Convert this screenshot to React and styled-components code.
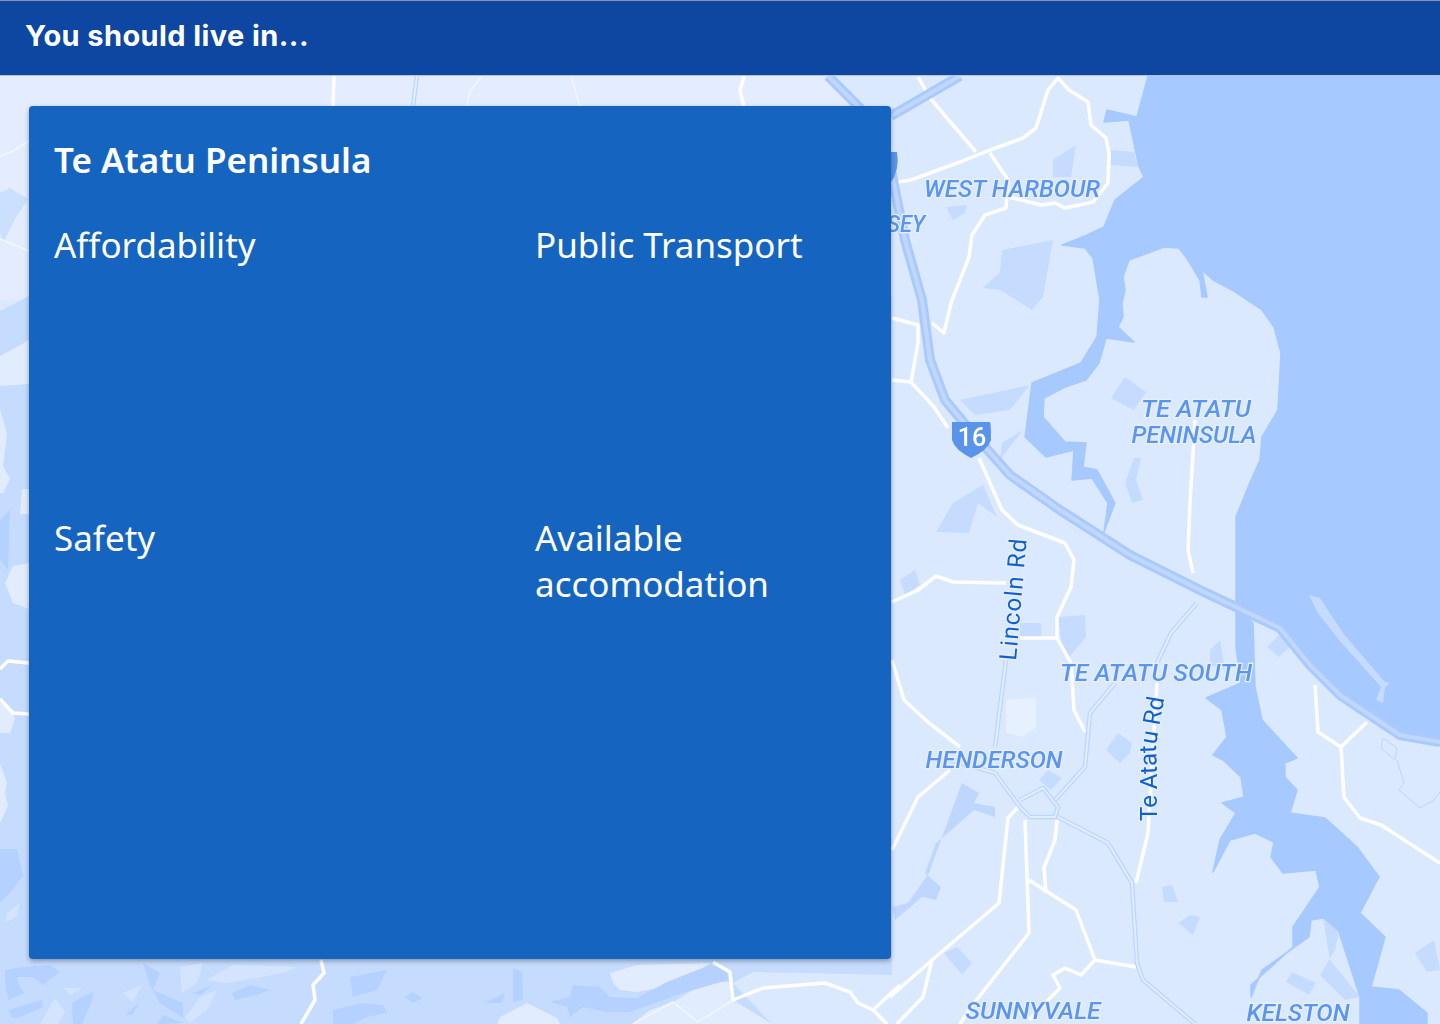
import React from 'react';
import styled, { createGlobalStyle } from 'styled-components';

const GlobalStyle = createGlobalStyle`
    html, body {
        margin:0;
        padding:0;
        height:100%;
        overflow:hidden;
    }
    body {
        font-family:"Noto Sans", "Open Sans", sans-serif;
    }
`

const WATER = '1148,76 1440,76 1440,745 1400,735 1340,695 1310,665 1280,628 1236,606 1236,550 1236,517 1251,480 1260,460 1262,437 1278,410 1281,353 1274,327 1262,310 1232,290 1213,280 1202,270 1207,297 1202,297 1200,280 1188,260 1179,248 1164,247 1129,260 1123,277 1125,290 1122,303 1123,317 1118,327 1134,342 1106,338 1099,363 1086,380 1065,387 1044,398 1043,417 1065,442 1086,443 1083,467 1097,470 1115,503 1104,532 1108,503 1092,478 1072,480 1074,450 1046,457 1025,437 1032,383 1081,363 1097,337 1100,300 1093,258 1085,248 1062,245 1085,236 1104,227 1115,200 1144,177 1139,167 1129,120 1104,122 1107,110 1137,117';
const CREEK = '1236,606 1253,623 1255,687 1262,720 1297,758 1285,763 1285,777 1297,790 1290,813 1325,818 1357,847 1379,877 1360,913 1385,937 1371,987 1399,990 1427,1013 1427,1024 1360,1024 1360,997 1339,932 1323,918 1311,920 1309,937 1262,970 1251,997 1251,985 1293,947 1293,927 1320,887 1316,870 1283,873 1271,857 1274,842 1255,833 1230,840 1213,872 1220,840 1236,813 1222,803 1244,797 1241,777 1223,760 1213,755 1227,737 1222,710 1206,698 1241,683 1236,647';
const WEST_CREEK = '953,807 962,783 979,793 974,803 995,807 995,817 974,810 948,833 936,843 925,873 941,887 936,900 922,897 895,920 892,907 908,903 929,873';

const SHOALS = [
    '1053,160 1076,145 1071,177 1053,177',
    '983,288 1000,272 1002,250 1053,240 1043,297 1032,310 1000,290',
    '1111,398 1125,377 1146,392 1134,410',
    '1125,483 1134,458 1141,458 1136,480 1143,500 1132,503',
    '946,207 967,205 965,213 953,220',
    '1058,617 1085,615 1086,637 1069,657 1062,647',
    '1020,623 1041,623 1041,637 1020,637',
    '1106,750 1118,733 1132,743 1130,753 1120,763',
    '1039,780 1048,770 1062,778 1051,790',
    '944,953 957,947 972,963 962,975',
    '1162,887 1172,885 1178,902 1164,902',
    '1178,923 1190,915 1200,917 1193,935',
    '1286,982 1292,972 1316,983 1309,995',
    '1415,953 1434,940 1440,970 1427,972',
    '1267,647 1279,635 1290,647 1279,657',
    '1339,932 1323,918 1330,960 1360,997 1345,1000 1320,975 1335,950',
    '960,400 1030,385 1010,410 975,415',
    '1002,443 1023,430 1000,460',
    '936,532 953,503 983,485 997,517 978,503 969,533',
    '1111,150 1134,152 1138,167 1111,165',
    '900,580 915,570 920,585 905,595',
    '1210,650 1220,640 1225,670 1210,665',
];

const ROADS = [
    '892,183 911,180 960,162 990,150 1023,138 1036,128 1048,90 1058,78 1069,90 1088,102 1091,125 1106,138 1109,153 1108,183 1093,202 1065,208 1055,203 1041,205 1009,197',
    '918,77 930,98 976,152',
    '990,153 1008,180 1006,208 985,215 972,235 969,257 951,303 944,333 932,323',
    '892,318 918,325 918,343 911,382 892,380',
    '911,382 934,407 948,428',
    '979,458 1002,510 1018,525 1065,543 1074,560 1071,587 1057,617 1057,638 1020,638',
    '1057,638 1071,663 1074,710 1085,732',
    '892,602 918,590 936,576 953,582 1006,583',
    '1195,420 1190,503 1188,550 1193,573',
    '1157,683 1148,833 1136,883',
    '892,660 904,700 929,723 960,747',
    '950,770 918,797 892,850',
    '1018,807 1008,818 999,903 932,960 890,997',
    '932,960 923,997 897,1024',
    '1025,820 1029,933 971,1007 960,1024',
    '1029,880 1076,910 1095,960 1136,967',
    '1095,960 1081,975 1065,968 1053,975 1060,988 1029,1020',
    '1057,820 1055,840 1044,868 1046,893',
    '1315,685 1318,732 1341,747 1367,722',
    '1341,747 1344,797 1360,818 1381,825 1440,863',
    '321,960 324,973 313,985 315,1000 301,1024',
    '713,962 730,972 733,1000 763,988 825,983 850,992 858,1003 873,1010 900,985',
    '873,1010 887,1024',
    '0,669 8,661 29,663',
    '0,699 13,713 29,714',
    '334,76 333,106',
    '744,76 740,91 744,106',
];

const THIN_ROADS = [
    '0,156 13,151 29,141',
    '0,239 29,251',
    '482,76 470,91 467,106',
    '571,76 580,106',
    '633,1024 673,1002 698,1022 733,1000',
];

const LIGHT_ROADS = [
    '1197,603 1171,633 1157,663',
    '1115,683 1090,713 1085,767 1055,800',
    '1020,800 1043,788 1058,807 1055,817 1030,817 1020,807 995,773',
    '1058,817 1108,843 1132,883 1137,963 1143,980 1195,1024',
    '1006,660 995,747',
    '995,773 950,760',
    '417,76 413,106',
];

// terrain on the western side, lightest first
const WEST_LIGHT = [
    '0,386 29,384 29,340 15,348 0,356',
    '0,409 7,433 3,466 10,479 3,493 0,493',
    '22,489 29,489 29,514 20,514',
    '5,583 13,566 29,563 29,609 13,603',
    '0,699 13,713 15,719 10,733 0,733',
    '0,763 7,783 5,793 8,806 0,823',
    '610,973 637,965 710,963 690,977 663,987 637,992 620,990 613,983',
    '497,1024 500,1017 527,1003 557,1018 560,1024',
    '632,1024 650,1010 673,1002 707,982 730,982 733,1000 772,1024',
];

const WEST_PALE = [
    '180,967 203,963 197,983 182,993',
    '207,980 233,965 297,967 283,973 227,983',
    '40,1024 55,998 65,1012 58,1024',
    '63,988 82,988 70,995',
    '123,993 142,985 132,1002',
    '185,1018 200,997 217,990 207,1010 190,1023',
    '7,913 20,903 17,916 5,923',
];

const WEST_DARK = [
    '5,970 23,967 50,965 60,972 43,985 33,977 17,977 20,988 25,993 8,1000 5,980',
    '8,1010 42,1000 43,1007 20,1017 12,1018',
    '72,1003 92,992 93,998 82,1024 73,1024',
    '125,1015 140,1002 132,1015',
    '143,963 160,973 153,990 183,1003 183,1018 160,1003 150,985',
    '232,993 250,985 270,990 257,995 235,1000',
    '193,993 213,985 200,995',
    '157,1024 163,1015 183,1023',
    '333,1010 363,1003 383,1005 387,1013 367,1017 353,1024 333,1024',
    '350,977 387,970 377,990 353,997',
    '405,997 413,992 422,998 413,1003',
    '550,1002 570,997 573,985 600,987 610,997 637,998 667,982 710,965 727,970 728,980 683,993 630,1012 607,1012 583,1007 570,1017 567,1007',
    '485,1003 505,993 502,1003',
    '513,968 522,972 523,1000 513,1002',
    '0,849 17,849 23,876 10,893 0,903',
    '0,520 10,510 8,570 0,560',
];

const MotorwayPoints = '828,76 860,108 891,170 905,240 922,300 930,360 945,400 970,430 1010,475 1060,510 1130,555 1200,590 1280,628 1310,665 1340,695 1400,735 1440,742';
const MotorwayNorth = '891,116 960,76';

const PLACE_LABELS = [
    { text:'WEST HARBOUR', x:1012, y:197, width:176 },
    { text:'SEY', x:906, y:232, width:38 },
    { text:'TE ATATU', x:1196, y:417, width:110 },
    { text:'PENINSULA', x:1194, y:443, width:125 },
    { text:'TE ATATU SOUTH', x:1156, y:681, width:192 },
    { text:'HENDERSON', x:994, y:768, width:137 },
    { text:'SUNNYVALE', x:1033, y:1019, width:135 },
    { text:'KELSTON', x:1298, y:1021, width:103 },
];

const MapView = () => (
    <MapLayer viewBox="0 76 1440 948" preserveAspectRatio="none">
        <defs>
            <path id="te-atatu-rd" d="M1157 821 L1157 772 L1156 745 L1164 700" />
        </defs>
        <rect x="0" y="76" width="1440" height="948" fill="#dbe9ff" />
        <polygon points="0,76 826,76 860,106 860,300 0,300" fill="#e3edff" />
        <polygon points="0,311 29,296 892,296 892,1024 0,1024" fill="#c6dcff" />
        <polygon points="0,193 10,188 28,199 15,219 3,243 0,233" fill="#cbdfff" />
        <polygon points="733,983 753,972 892,975 892,1024 772,1024" fill="#dbe9ff" />
        {WEST_LIGHT.map((p, i) => <polygon key={i} points={p} fill="#e1ecff" />)}
        {WEST_PALE.map((p, i) => <polygon key={i} points={p} fill="#d4e4ff" />)}
        {WEST_DARK.map((p, i) => <polygon key={i} points={p} fill="#b5d1ff" />)}
        <WaterShape points={WATER} />
        <WaterShape points={CREEK} />
        <polygon points={WEST_CREEK} fill="#bfd7ff" />
        {SHOALS.map((p, i) => <polygon key={i} points={p} fill="#c5dbff" />)}
        <polygon points="1006,700 1036,698 1036,727 1023,737 1006,733" fill="#e6f0ff" />
        <polygon points="1309,595 1320,598 1343,633 1385,682 1390,683 1385,687 1383,703 1376,700 1381,687 1339,640 1318,613" fill="#c5dbff" />
        <polyline points="1383,738 1397,748 1395,760 1381,748 1383,738" fill="none" stroke="#bcd5ff" strokeWidth="1" />
        <polyline points="1397,760 1404,783 1399,790 1420,808 1434,800 1440,792" fill="none" stroke="#bcd5ff" strokeWidth="1" />
        {ROADS.map((p, i) => <RoadLine key={i} points={p} />)}
        {THIN_ROADS.map((p, i) => <ThinRoad key={i} points={p} />)}
        {LIGHT_ROADS.map((p, i) => (
            <g key={i}>
                <CasedRoad points={p} />
                <CasedCore points={p} />
            </g>
        ))}
        <MotorwayEdge points={MotorwayPoints} />
        <MotorwayCore points={MotorwayPoints} />
        <MotorwayEdge points={MotorwayNorth} />
        <MotorwayCore points={MotorwayNorth} />
        <path d="M952 440 Q952 424 952 422 L990 422 Q991 424 991 440 Q988 450 971 458 Q955 450 952 440 Z" fill="#5a94ea" />
        <path d="M884 152 L897 152 Q900 170 890 184 L884 184 Z" fill="#5a94ea" />
        <ShieldText x="972" y="446">16</ShieldText>
        {PLACE_LABELS.map((l) => (
            <PlaceLabel key={l.text} x={l.x} y={l.y} textLength={l.width} lengthAdjust="spacingAndGlyphs">{l.text}</PlaceLabel>
        ))}
        <RoadLabel transform="translate(1016,661) rotate(-85)" textLength="122">Lincoln Rd</RoadLabel>
        <RoadLabel>
            <textPath href="#te-atatu-rd">Te Atatu Rd</textPath>
        </RoadLabel>
    </MapLayer>
);

const App = () => {
    return (
        <Page>
            <GlobalStyle />
            <TopBar>
                <BarTitle>You should live in...</BarTitle>
            </TopBar>
            <MapArea>
                <MapView />
                <SuburbCard>
                    <SuburbName>Te Atatu Peninsula</SuburbName>
                    <StatGrid>
                        <StatLabel>Affordability</StatLabel>
                        <StatLabel>Public Transport</StatLabel>
                        <StatLabel>Safety</StatLabel>
                        <StatLabel>Available accomodation</StatLabel>
                    </StatGrid>
                </SuburbCard>
            </MapArea>
        </Page>
    )
}

export default App;

const Page = styled.div`
    display:flex;
    flex-direction:column;
    width:100%;
    height:100vh;
    overflow:hidden;
`
const TopBar = styled.header`
    display:flex;
    align-items:center;
    flex:0 0 76px;
    box-sizing:border-box;
    padding:0 25px 6px;
    background:#0d47a1;
    border-top:1px solid #8a94a3;
    border-bottom:1px solid #b9c2d0;
`
const BarTitle = styled.h1`
    margin:0;
    font-family:Inter, "Liberation Sans", sans-serif;
    font-size:29px;
    font-weight:700;
    letter-spacing:0.4px;
    color:white;
`
const MapArea = styled.main`
    position:relative;
    flex:1;
    padding:30px 0 0 29px;
    overflow:hidden;
`
const MapLayer = styled.svg`
    position:absolute;
    top:0;
    left:0;
    width:100%;
    height:100%;
    filter:blur(0.5px);
`
const WaterShape = styled.polygon`
    fill:#a6c9ff;
    stroke:#a6c9ff;
    stroke-width:1.5;
    stroke-linejoin:round;
`
const RoadLine = styled.polyline`
    fill:none;
    stroke:white;
    stroke-width:3.5;
    stroke-linejoin:round;
`
const ThinRoad = styled.polyline`
    fill:none;
    stroke:#f3f7ff;
    stroke-width:1.5;
`
const CasedRoad = styled.polyline`
    fill:none;
    stroke:#bcd5ff;
    stroke-width:4.5;
    stroke-linejoin:round;
`
const CasedCore = styled.polyline`
    fill:none;
    stroke:#e2edff;
    stroke-width:2;
    stroke-linejoin:round;
`
const MotorwayEdge = styled.polyline`
    fill:none;
    stroke:#a9c9ff;
    stroke-width:10;
    stroke-linejoin:round;
`
const MotorwayCore = styled.polyline`
    fill:none;
    stroke:#c0d8ff;
    stroke-width:4;
    stroke-linejoin:round;
`
const ShieldText = styled.text`
    font-family:Roboto, sans-serif;
    font-size:25px;
    font-weight:500;
    fill:white;
    text-anchor:middle;
`
const PlaceLabel = styled.text`
    font-family:Roboto, sans-serif;
    font-style:italic;
    font-weight:500;
    font-size:24px;
    fill:#5b95ef;
    stroke:#e6f0ff;
    stroke-width:2.5;
    paint-order:stroke;
    text-anchor:middle;
`
const RoadLabel = styled.text`
    font-family:Roboto, sans-serif;
    font-size:24px;
    fill:#0f5fd0;
    stroke:#e6f0ff;
    stroke-width:2.5;
    paint-order:stroke;
`
const SuburbCard = styled.section`
    position:relative;
    box-sizing:border-box;
    width:862px;
    height:853px;
    padding:31px 25px;
    background:#1565c0;
    border-radius:4px;
    box-shadow:0 2px 5px rgba(0, 0, 0, 0.35);
    color:white;
`
const SuburbName = styled.h2`
    margin:0 0 39px;
    font-size:35px;
    line-height:46px;
    font-weight:600;
`
const StatGrid = styled.div`
    display:grid;
    grid-template-columns:481px 1fr;
    grid-template-rows:293px 1fr;
`
const StatLabel = styled.p`
    margin:0;
    font-size:35px;
    line-height:46px;
    font-weight:400;
`
